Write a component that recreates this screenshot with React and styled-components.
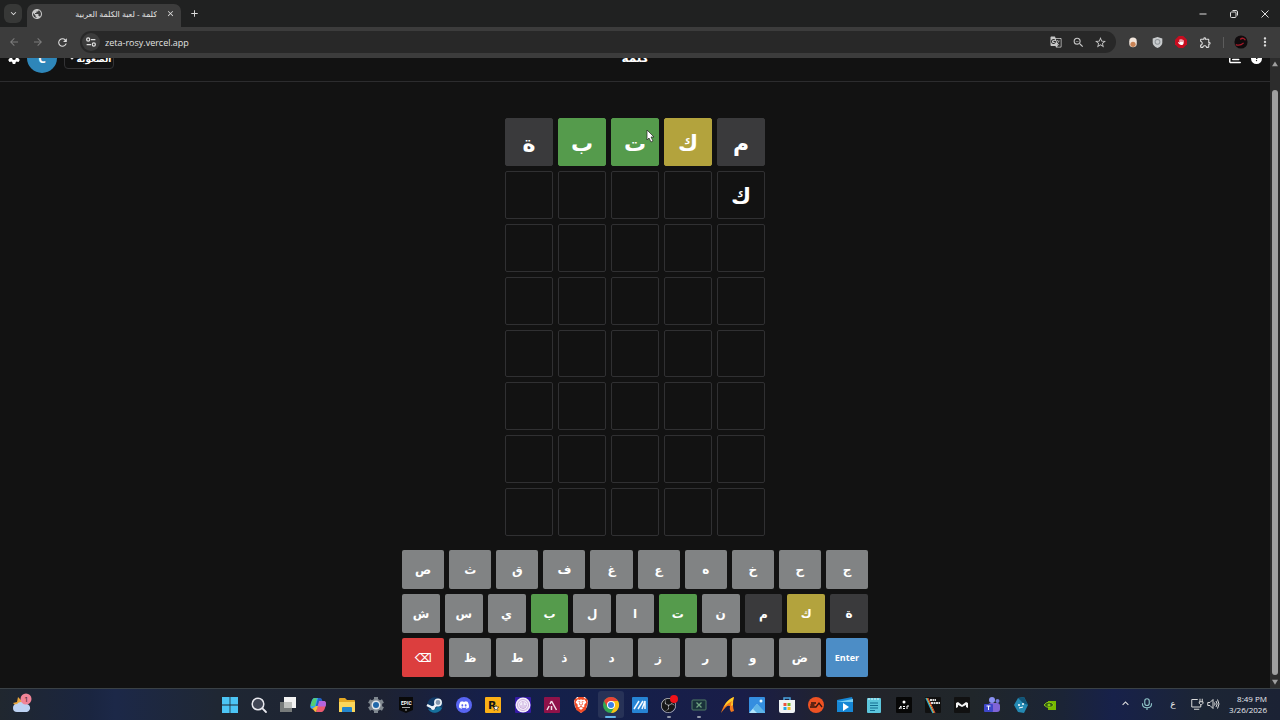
import React from "react"
import styled, { createGlobalStyle } from "styled-components"
import { FaGear, FaChartBar, FaCircleQuestion, FaHand } from "react-icons/fa6"
import {
    MdPublic,
    MdClose,
    MdAdd,
    MdArrowBack,
    MdArrowForward,
    MdRefresh,
    MdKeyboardArrowDown,
    MdKeyboardArrowUp,
    MdGTranslate,
    MdZoomOut,
    MdStarBorder,
    MdOutlineExtension,
    MdMoreVert
} from "react-icons/md"
import { SiEpicgames, SiBrave, SiObsstudio, SiNvidia, SiEa, SiSteam, SiDiscord } from "react-icons/si"

const GlobalStyle = createGlobalStyle`
    * {
        box-sizing: border-box;
    }

    body {
        margin: 0;
        background: #121212;
        font-family: "Open Sans", "DejaVu Sans", sans-serif;
        overflow: hidden;
    }

    button, input {
        font-family: inherit;
    }
`

const Screen = styled.div`
    display: flex;
    flex-direction: column;
    height: 100vh;
`

/* browser window */

const TabStrip = styled.div`
    display: flex;
    align-items: flex-end;
    height: 27px;
    padding-left: 4px;
    background: #202121;
`

const PlainButton = styled.button`
    display: flex;
    align-items: center;
    justify-content: center;
    flex-shrink: 0;
    padding: 0;
    border: 0;
    background: none;
    color: ${props => props.$color || "#dedede"};
    width: ${props => props.$width || 24}px;
    height: 24px;
`

const TabSearch = styled(PlainButton)`
    width: 18px;
    height: 19px;
    margin: 0 5px 4px 0;
    border-radius: 6px;
    background: #373837;
`

const NewTab = styled(PlainButton)`
    width: 26px;
    align-self: center;
`

const Tab = styled.div`
    display: flex;
    align-items: center;
    gap: 6px;
    width: 154px;
    height: 23px;
    padding: 0 4px 4px;
    border-radius: 7px 7px 0 0;
    background: #3c3c3c;
    color: #c8c8c8;
`

const TabTitle = styled.span`
    flex: 1;
    direction: rtl;
    white-space: nowrap;
    overflow: hidden;
    font-size: 8px;
    line-height: 16px;
    color: #e3e3e3;
`

const WindowControls = styled.div`
    display: flex;
    margin-left: auto;
    align-self: center;
`

const Toolbar = styled.div`
    display: flex;
    align-items: center;
    height: 31px;
    padding: 0 3px 1px 2px;
    background: #3c3c3c;
`

const AddressBar = styled.div`
    display: flex;
    flex: 1;
    align-items: center;
    height: 22px;
    margin: 0 5px 0 6px;
    padding: 0 5px 0 2px;
    border-radius: 11px;
    background: #282828;
`

const SiteInfo = styled(PlainButton)`
    width: 18px;
    height: 18px;
    border-radius: 50%;
    background: #3c3c3c;
`

const AddressInput = styled.input`
    flex: 1;
    min-width: 0;
    padding: 0 0 0 5px;
    border: 0;
    outline: 0;
    background: none;
    color: #e3e3e3;
    font-size: 9px;
`

const Divider = styled.span`
    width: 1px;
    height: 11px;
    margin: 0 5px 0 6px;
    background: #5c5c5c;
`

const Viewport = styled.div`
    display: flex;
    flex: 1;
    min-height: 0;
    overflow: hidden;
    background: #121212;
`

/* the page rests at the end of its scroll, so the header runs out at the top */
const Page = styled.div`
    display: flex;
    flex: 1;
    flex-direction: column;
    justify-content: flex-end;
    overflow: hidden;
    direction: rtl;
    color: #fff;
`

const Scrollbar = styled.div`
    display: flex;
    flex-direction: column;
    align-items: center;
    justify-content: space-between;
    width: 10px;
    padding: 3px 0;
    background: #2c2c2c;
    color: #9f9f9f;
`

const Thumb = styled.div`
    flex: 1;
    width: 6px;
    margin: 23px 0 4px;
    border-radius: 3px;
    background: #9f9f9f;
`

/* game */

const Header = styled.header`
    display: grid;
    grid-template-columns: 1fr auto 1fr;
    align-items: center;
    flex-shrink: 0;
    height: 47px;
    padding: 0 8px;
    border-bottom: 1px solid #2c2c2e;
`

const HeaderGroup = styled.div`
    display: flex;
    align-items: center;
    gap: ${props => props.$gap}px;
    justify-content: ${props => props.$end ? "flex-end" : "flex-start"};
`

const HeaderButton = styled(PlainButton)`
    width: 12px;
    color: #fff;
`

const GameTitle = styled.h1`
    margin: 0;
    font-size: 12px;
    line-height: 20px;
`

const Avatar = styled.button`
    width: 30px;
    height: 30px;
    padding: 0;
    border: 0;
    border-radius: 50%;
    background: #2e86b9;
    color: #fff;
    font-size: 12px;
    font-weight: 700;
`

const Difficulty = styled.button`
    display: flex;
    align-items: center;
    justify-content: center;
    width: 50px;
    height: 22px;
    padding: 0;
    border: 1px solid #333335;
    border-radius: 4px;
    background: #121212;
    color: #fff;
    font-size: 9px;
    font-weight: 700;
`

const Board = styled.div`
    display: grid;
    grid-template-columns: repeat(5, 1fr);
    grid-template-rows: repeat(8, 1fr);
    gap: 5px;
    flex-shrink: 0;
    width: 260px;
    height: 418px;
    margin: 36px auto 14px;
`

const stateColors = {
    absent: "#3a3a3c",
    present: "#b3a33d",
    correct: "#559b4c",
    enter: "#4c8dc6",
    erase: "#dc3e3e"
}

const Tile = styled.div`
    display: flex;
    align-items: center;
    justify-content: center;
    border: 1px solid ${props => stateColors[props.$state] || "#303032"};
    border-radius: 2px;
    background: ${props => stateColors[props.$state] || "#121212"};
    font-size: 22px;
    font-weight: 700;
    line-height: 28px;
`

const Keyboard = styled.div`
    display: flex;
    flex-direction: column;
    flex-shrink: 0;
    gap: 5px;
    width: 466px;
    margin: 0 auto 11px;
`

const KeyRow = styled.div`
    display: flex;
    gap: 5px;
`

const Key = styled.button`
    flex: 1;
    min-width: 0;
    height: 39px;
    padding: 0;
    border: 0;
    border-radius: 2px;
    background: ${props => stateColors[props.$state] || "#818384"};
    color: #fff;
    font-size: ${props => props.$state === "enter" ? 9 : 12}px;
    font-weight: 700;
`

const Pointer = styled.svg`
    position: absolute;
    left: 646px;
    top: 129px;
`

/* desktop taskbar */

const TaskbarRow = styled.div`
    display: grid;
    grid-template-columns: 215px 1fr 215px;
    align-items: center;
    height: 32px;
    border-top: 1px solid #3a4146;
    background: linear-gradient(90deg, #20272f 0, #1a2540 7%, #1c2848 9%, #1f2733 17%, #1d2233 30%, #151f4a 38%, #14204a 46%, #191d48 58%, #23242a 66%, #20262a 76%, #1b2436 83%, #17214a 87%, #1c2534 94%, #1b2234 100%);
`

const Weather = styled(PlainButton)`
    margin: 0 0 4px 10px;
`

const Apps = styled.div`
    display: grid;
    grid-template-columns: repeat(29, 1fr);
    justify-items: center;
`

const AppButton = styled.button`
    display: flex;
    flex-direction: column;
    align-items: center;
    justify-content: flex-end;
    gap: 3px;
    width: 26px;
    height: 27px;
    padding: 0;
    border: 0;
    border-radius: 3px;
    background: ${props => props.$active ? "#273257" : "none"};
`

const Indicator = styled.span`
    width: ${props => props.$active ? 11 : 4}px;
    height: 2px;
    border-radius: 1px;
    background: ${props => props.$active ? "#63b4ec" : props.$running ? "#9298a8" : "transparent"};
`

const Tray = styled.div`
    display: flex;
    align-items: center;
    justify-content: flex-end;
    padding: 0 13px 2px 0;
    color: #e8ebf0;
`

const TrayLabel = styled.span`
    width: 32px;
    text-align: center;
    font-size: 9px;
`

const Clock = styled.div`
    width: 46px;
    text-align: right;
    font-size: 8px;
    line-height: 11px;
`

const guesses = [
    [["م", "absent"], ["ك", "present"], ["ت", "correct"], ["ب", "correct"], ["ة", "absent"]],
    [["ك"]]
]

const keyRows = ["جحخهعغفقثص", "ةكمنتالبيسش", "↵ضورزدذطظ⌫"]

const keyStates = {
    "ة": "absent",
    "م": "absent",
    "ك": "present",
    "ت": "correct",
    "ب": "correct",
    "↵": "enter",
    "⌫": "erase"
}

const Icon = ({ size = 16, children }) => (
    <svg width={size} height={size} viewBox="0 0 16 16" fill="none" overflow="visible" aria-hidden="true">{children}</svg>
)

const Square = ({ color, children }) => (
    <Icon>
        <rect width="16" height="16" rx="1" fill={color} />
        {children}
    </Icon>
)

const apps = [
    { name: "Start", icon: <Icon><path d="M0 0h7.6v7.6H0zM8.4 0H16v7.6H8.4zM0 8.4h7.6V16H0zM8.4 8.4H16V16H8.4z" fill="#4cc5f5" /></Icon> },
    { name: "Search", icon: <Icon><circle cx="7" cy="7" r="5.8" fill="#414655" stroke="#e8e8ee" strokeWidth="1.5" /><path d="m11.4 11.4 3.6 3.6" stroke="#e8e8ee" strokeWidth="1.8" strokeLinecap="round" /></Icon> },
    { name: "Task view", icon: <Icon><path d="M4 0h12v11H4z" fill="#f3f3f3" /><path d="M0 5h12v10H0z" fill="#777b7b" /><path d="M4 5h8v6H4z" fill="#bfc1bf" /></Icon> },
    { name: "Copilot", icon: <Icon><path d="M5 1h5L7 12H3C0 12-.2 9 1 6c1-3 1.400-5 4-5Z" fill="#37a8ef" /><path d="M4 1.200h3L5 9H1c0-3 1.500-7 3-7.800Z" fill="#55cf72" /><path d="m6 15 3-11h4c3 0 3.500 2 2.500 5-1 4-2 6-5 6H6Z" fill="#ed5a70" /><path d="m9 4-1.500 5.500h8c1-3.500.5-5.500-2.500-5.500H9Z" fill="#b565de" /><path d="m2 12 4-3h2l-2 6c-2 0-2-3-4-3Z" fill="#f5bb3b" /><path d="M8 1h2c1.600 0 2 1.500 2.500 3H9L7.500 9H5.800L8 1Z" fill="#2261c8" /></Icon> },
    { name: "File Explorer", icon: <Icon><path d="M0 2q0-1 1-1h5l2 2h7q1 0 1 1v11H0V2Z" fill="#e5a823" /><path d="M0 5h16v10H0V5Z" fill="#fbd65a" /><path d="M3 15v-4q0-1 1-1h8q1 0 1 1v4H3Z" fill="#2385cc" /></Icon> },
    { name: "Settings", icon: <Icon><g fill="#7f878f"><circle cx="8" cy="8" r="6.200" /><path d="M6 0h4v16H6z" /><path d="M6 0h4v16H6z" transform="rotate(60 8 8)" /><path d="M6 0h4v16H6z" transform="rotate(120 8 8)" /></g><circle cx="8" cy="8" r="4.500" fill="#e1e6eb" /><circle cx="8" cy="8" r="3" fill="#2068aa" /></Icon> },
    { name: "Epic Games", icon: <Icon><path d="M1 0h14v13l-7 3-7-3Z" fill="#090909" /><text x="3" y="8" fontFamily="Roboto" fontSize="5" fontWeight="700" fill="#fff">EPIC</text><path d="M4 10.500h8M7 13h2" stroke="#aaa" /></Icon> },
    { name: "Steam", icon: <Icon><circle cx="8" cy="8" r="7.800" fill="#123b68" /><path d="M1 12a8 8 0 0 0 14-1l-4-2-4 4Z" fill="#16709c" /><path d="m0 8 6 3 5-5" stroke="#eef4f8" strokeWidth="2.500" /><circle cx="11" cy="5.500" r="3.200" fill="#8499af" stroke="#eef4f8" strokeWidth="1.500" /><circle cx="6" cy="11" r="2" fill="#eef4f8" /></Icon> },
    { name: "Discord", icon: <Icon><circle cx="8" cy="8" r="8" fill="#5865f2" /><SiDiscord x="3" y="3" size={10} color="#fff" /></Icon> },
    { name: "Rockstar", icon: <Square color="#fcb016"><text x="3" y="12" fontFamily="DejaVu Sans" fontSize="11" fontWeight="700" fill="#151515">R</text><path d="m11 8 .8 2H14l-1.700 1.300.700 2.200-2-1.300-2 1.300.700-2.200L8 10h2.200Z" fill="#fff" stroke="#151515" strokeWidth=".5" /></Square> },
    { name: "Tor", icon: <Square color="#361ba6"><circle cx="8" cy="8" r="7.500" fill="#f2eefa" /><g stroke="#b98fcf" strokeWidth=".7"><circle cx="8" cy="8" r="5.500" /><circle cx="8" cy="8" r="3.500" strokeDasharray="1 .5" /><path d="M8 5v7M6 8v3M10 8v3" /></g></Square> },
    { name: "Animation", icon: <Square color="#8f1249"><path d="m3 13 2.200-4M7.500 4l5 9M7.500 4 6 7M7.500 9v4" stroke="#f2dfe7" strokeWidth="1.500" /></Square> },
    { name: "Brave", icon: <Icon><path d="m4 0h8l3 4-1 6-6 6-6-6-1-6Z" fill="#fff" /><SiBrave size={16} color="#f04b27" /></Icon> },
    { name: "Chrome", active: true, icon: <Icon><circle cx="8" cy="8" r="8" fill="#34a853" /><path d="M8 0a8 8 0 0 1 7 4H8L4.500 10 1.100 4A8 8 0 0 1 8 0Z" fill="#e94335" /><path d="M15 4a8 8 0 0 1-7 12l3.500-6L8 4h7Z" fill="#fbc116" /><circle cx="8" cy="8" r="4" fill="#fff" /><circle cx="8" cy="8" r="3" fill="#3b80ea" /></Icon> },
    { name: "Macro", icon: <Square color="#2684d4"><path d="m2 12 5-8M6 12l5-8M10 12l3-8v8" stroke="#f3faff" strokeWidth="1.500" /></Square> },
    { name: "OBS Studio", running: true, icon: <Icon><circle cx="7" cy="8" r="7" fill="#161616" /><SiObsstudio x="0" y="1" size={15} color="#bfc0c7" /><circle cx="13" cy="2" r="4" fill="#f01219" /></Icon> },
    { name: "Xbox", running: true, icon: <Icon><rect x="1" y="3" width="14" height="10" rx="1" fill="#19313b" stroke="#517d66" /><path d="m5.500 5.500 5 5m0-5-5 5" stroke="#70a381" strokeWidth="1.300" /></Icon> },
    { name: "Racing", icon: <Icon><path d="M1 16C3 10 6 3 14 0q-2 8 0 14l-3 1q-2-3-1-6-2-1-4 1-2 2-5 6Z" fill="#f47a1c" /><path d="M4 10C6 5 9 2 14 0q-2 5-1 8l-2 1q0-3 1-5-4 2-8 6Z" fill="#ffd228" /></Icon> },
    { name: "Photos", icon: <Square color="#348ee0"><path d="m0 16 8-9 8 9Z" fill="#b0e4fb" /><path d="m7 8 1-1 8 8v1H8L4 12Z" fill="#5db4e8" /><circle cx="12" cy="4" r="1.500" fill="#e6f8ff" /></Square> },
    { name: "Store", icon: <Icon><path d="M5 4V1h6v3" stroke="#49a3de" strokeWidth="1.500" /><path d="M0 3h16v11q0 2-2 2H2q-2 0-2-2Z" fill="#f0f3f4" /><path d="M4.500 6h3v3h-3Z" fill="#ed533f" /><path d="M8.500 6h3v3h-3Z" fill="#79b929" /><path d="M4.500 10h3v3h-3Z" fill="#21a5e5" /><path d="M8.500 10h3v3h-3Z" fill="#f7b71d" /></Icon> },
    { name: "EA", icon: <Icon><circle cx="8" cy="8" r="8" fill="#ee5223" /><path d="M3 6h5M2.500 8h4M2 10h6l3-4 3 4" stroke="#34150e" strokeWidth="1.300" /></Icon> },
    { name: "Movies", icon: <Icon><path d="m0 3 15-3 1 3v12H0Z" fill="#1687d5" /><path d="M0 5 16 2v3H0Z" fill="#76cdf2" /><path d="m6 6 6 4-6 4Z" fill="#fff" /></Icon> },
    { name: "Notepad", icon: <Icon><rect x="1" y="1" width="14" height="15" rx="1" fill="#5cc6dc" /><path d="M3 1v2m3-2v2m3-2v2m3-2v2" stroke="#d9f6fa" /><path d="M4 6h8M4 8.500h8M4 11h8M4 13.500h5" stroke="#126d91" /></Icon> },
    { name: "Ace", icon: <Square color="#070707"><circle cx="8" cy="5" r="1.500" fill="#fff" /><path d="m3 12 2-3v3M7 9.500h2M7 11.500h2M11 12V9h2" stroke="#fff" /></Square> },
    { name: "Session", icon: <Square color="#101010"><path d="m1 1 7 15" stroke="#2ba3cd" strokeWidth="1.500" /><path d="m2 1 7 15" stroke="#efbf3c" /><path d="m3 1 7 15" stroke="#df4b38" /><path d="M5 3h6M6 6h9" stroke="#d9d9d9" strokeWidth="2" strokeDasharray="2 .5" /></Square> },
    { name: "Mask", icon: <Square color="#111"><path d="M2 11V6l2-1 4 3 4-3 2 1v5l-2-1V8l-4 2-4-2v2Z" fill="#f4f4f4" /></Square> },
    { name: "Teams", icon: <Icon><circle cx="8" cy="3" r="3" fill="#8a91f2" /><circle cx="13.500" cy="4" r="2" fill="#7379da" /><rect x="4" y="6" width="12" height="9" rx="3" fill="#8065d6" /><rect x="0" y="7" width="9" height="8" rx="1" fill="#3e47c9" /><path d="M2.500 9h4M4.500 9v4" stroke="#fff" /></Icon> },
    { name: "Messenger", icon: <Icon><path d="M1 8 5 1l6-1 4 8-4 8-6-1Z" fill="#2489b3" /><path d="m5 1 6-1 4 8-5-2Z" fill="#115477" /><circle cx="6" cy="8" r="1" fill="#fff" /><circle cx="10" cy="7" r="1" fill="#fff" /><path d="m6 11 4-1" stroke="#fff" /></Icon> },
    { name: "NVIDIA", icon: <Icon><path d="M6 4h8v9H6Z" fill="#76b900" /><path d="M2 8q5-6 10 0-5 5-10 0Z" fill="#315a13" stroke="#8ccb13" /><circle cx="7" cy="8" r="1.500" fill="#8ccb13" /></Icon> }
]

const BrowserChrome = () => (
    <>
        <TabStrip>
            <TabSearch aria-label="Search tabs"><MdKeyboardArrowDown size={11} /></TabSearch>
            <Tab>
                <MdPublic size={12} />
                <TabTitle>كلمة - لعبة الكلمة العربية</TabTitle>
                <PlainButton $width={14} aria-label="Close tab"><MdClose size={9} /></PlainButton>
            </Tab>
            <NewTab aria-label="New tab"><MdAdd size={11} /></NewTab>
            <WindowControls>
                <PlainButton $width={31} aria-label="Minimize"><Icon size={8}><path d="M1 8h14" stroke="currentColor" strokeWidth="2" /></Icon></PlainButton>
                <PlainButton $width={31} aria-label="Restore"><Icon size={8}><rect x="1" y="4" width="11" height="11" rx="2" stroke="currentColor" strokeWidth="2" /><path d="M5 1h7q3 0 3 3v7" stroke="currentColor" strokeWidth="2" /></Icon></PlainButton>
                <PlainButton $width={31} aria-label="Close"><Icon size={8}><path d="m1 1 14 14M15 1 1 15" stroke="currentColor" strokeWidth="2" /></Icon></PlainButton>
            </WindowControls>
        </TabStrip>
        <Toolbar>
            <PlainButton $color="#7b7b7b" aria-label="Back"><MdArrowBack size={12} /></PlainButton>
            <PlainButton $color="#7b7b7b" aria-label="Forward"><MdArrowForward size={12} /></PlainButton>
            <PlainButton aria-label="Reload"><MdRefresh size={13} /></PlainButton>
            <AddressBar>
                <SiteInfo aria-label="Site information">
                    <Icon size={10}>
                        <g stroke="currentColor" strokeWidth="2"><circle cx="3.500" cy="4" r="2.500" /><path d="M8 4h7M1 12h7" /><circle cx="12.500" cy="12" r="2.500" /></g>
                    </Icon>
                </SiteInfo>
                <AddressInput aria-label="Address" defaultValue="zeta-rosy.vercel.app" />
                <PlainButton $width={22} $color="#c7c7c7" aria-label="Translate"><MdGTranslate size={12} /></PlainButton>
                <PlainButton $width={22} $color="#c7c7c7" aria-label="Zoom"><MdZoomOut size={13} /></PlainButton>
                <PlainButton $width={22} $color="#c7c7c7" aria-label="Bookmark"><MdStarBorder size={13} /></PlainButton>
            </AddressBar>
            <PlainButton aria-label="Egg extension"><Icon size={12}><rect x="3" y="2" width="10" height="13" rx="5" fill="#f2e6dc" /><circle cx="8" cy="11" r="3.500" fill="#c98355" /></Icon></PlainButton>
            <PlainButton aria-label="Shield extension"><Icon size={11}><path d="m8 0 7 2v6q0 5-7 8-7-3-7-8V2Z" fill="#c8cbcd" /><circle cx="8" cy="7" r="3.500" stroke="#8f9498" strokeWidth="1.500" /></Icon></PlainButton>
            <PlainButton aria-label="Ad blocker"><Icon size={12}><path d="M5 0h6l5 5v6l-5 5H5l-5-5V5Z" fill="#c70d20" /><FaHand x="4" y="4" size={8} color="#fff" /></Icon></PlainButton>
            <PlainButton aria-label="Extensions"><MdOutlineExtension size={13} /></PlainButton>
            <Divider />
            <PlainButton aria-label="Profile"><Icon size={14}><circle cx="8" cy="8" r="7.500" fill="#100b0d" /><path d="M7 5q4-3 6 1M2 11q5 2 9-2" stroke="#a61b29" strokeWidth="1.500" /></Icon></PlainButton>
            <PlainButton aria-label="Menu"><MdMoreVert size={14} /></PlainButton>
        </Toolbar>
    </>
)

const Game = () => {
    const tiles = Array.from({ length: 40 }, (_, i) => (guesses[Math.floor(i / 5)] || [])[i % 5] || [])

    return (
        <Page lang="ar">
            <Header>
                <HeaderGroup $gap={9}>
                    <HeaderButton aria-label="مساعدة"><FaCircleQuestion size={11} /></HeaderButton>
                    <HeaderButton aria-label="إحصائيات"><FaChartBar size={12} /></HeaderButton>
                </HeaderGroup>
                <GameTitle>كلمة</GameTitle>
                <HeaderGroup $gap={7} $end>
                    <Difficulty>
                        الصعوبة
                        <MdKeyboardArrowDown size={10} />
                    </Difficulty>
                    <Avatar>C</Avatar>
                    <HeaderButton aria-label="إعدادات"><FaGear size={12} /></HeaderButton>
                </HeaderGroup>
            </Header>
            <Board>
                {
                    tiles.map(([letter, state], i) => (
                        <Tile key={i} $state={state}>{letter}</Tile>
                    ))
                }
            </Board>
            <Keyboard>
                {
                    keyRows.map(row => (
                        <KeyRow key={row}>
                            {
                                row.split("").map(letter => (
                                    <Key key={letter} $state={keyStates[letter]}>
                                        {letter === "↵" ? "Enter" : letter}
                                    </Key>
                                ))
                            }
                        </KeyRow>
                    ))
                }
            </Keyboard>
        </Page>
    )
}

const Taskbar = () => (
    <TaskbarRow>
        <Weather aria-label="Weather">
            <svg width="20" height="20" viewBox="0 0 20 20">
                <path d="m1 10 4-1 1-5 3 3 5 1v5H4Z" fill="#e9a53a" />
                <path d="M5 19a4 4 0 0 1 0-8 5 5 0 0 1 8 0 4 4 0 0 1 2 8Z" fill="#bdd2f3" />
                <circle cx="14" cy="6" r="5.500" fill="#f08498" />
                <text x="12" y="9" fontSize="8" fill="#371d27">1</text>
            </svg>
        </Weather>
        <Apps>
            {
                apps.map(app => (
                    <AppButton key={app.name} $active={app.active} aria-label={app.name}>
                        {app.icon}
                        <Indicator $active={app.active} $running={app.running} />
                    </AppButton>
                ))
            }
        </Apps>
        <Tray>
            <PlainButton aria-label="Hidden icons"><MdKeyboardArrowUp size={13} /></PlainButton>
            <PlainButton $width={20} $color="#8fc4c9" aria-label="Microphone">
                <Icon size={12}><rect x="5" y="1" width="6" height="9" rx="3" stroke="currentColor" strokeWidth="1.500" /><path d="M2 7v1q0 5 6 5t6-5V7M8 13v3" stroke="currentColor" strokeWidth="1.500" /></Icon>
            </PlainButton>
            <TrayLabel lang="ar">ع</TrayLabel>
            <PlainButton $width={16} aria-label="Network">
                <Icon size={12}><path d="M9 2H1v10h12V9M4 15h7M12 1v4m3-4v4m-4 0h5v2l-2 2h-1l-2-2Z" stroke="currentColor" strokeWidth="1.300" /></Icon>
            </PlainButton>
            <PlainButton $width={16} aria-label="Volume">
                <Icon size={12}><path d="M1 6h3l4-4v12l-4-4H1ZM10 6q1.500 2 0 4M12 4q3 4 0 8M14 2q4 6 0 12" stroke="currentColor" strokeWidth="1.300" /></Icon>
            </PlainButton>
            <Clock>8:49 PM<br />3/26/2026</Clock>
        </Tray>
    </TaskbarRow>
)

const App = () => (
    <Screen>
        <GlobalStyle />
        <BrowserChrome />
        <Viewport>
            <Game />
            <Scrollbar>
                <Icon size={6}><path d="m8 1 8 13H0Z" fill="currentColor" /></Icon>
                <Thumb />
                <Icon size={6}><path d="m8 15 8-13H0Z" fill="currentColor" /></Icon>
            </Scrollbar>
        </Viewport>
        <Taskbar />
        <Pointer width="9" height="14" viewBox="0 0 9 14">
            <path d="M1 1v10l2-2 2 4 2-1-2-4h3Z" fill="#fff" stroke="#222" strokeWidth=".7" />
        </Pointer>
    </Screen>
)

export default App
